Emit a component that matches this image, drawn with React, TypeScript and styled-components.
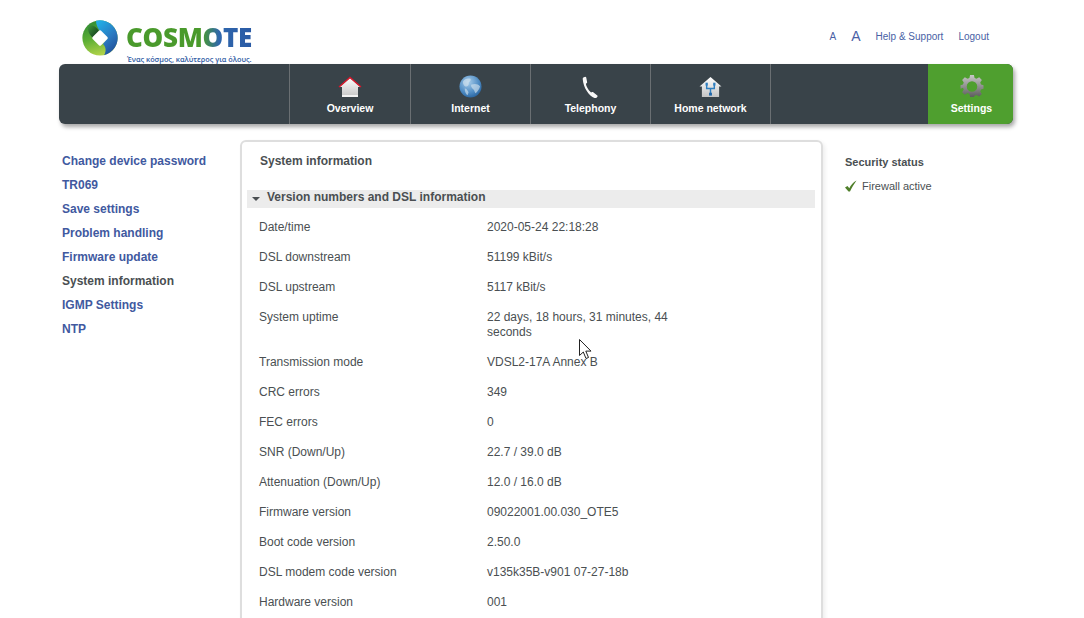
import styled, { createGlobalStyle } from "styled-components";

const GlobalStyle = createGlobalStyle`
  html, body {
    margin: 0;
    height: 618px;
    overflow: hidden;
    background: #fff;
    font-family: "Liberation Sans", Arial, sans-serif;
    font-size: 12px;
    color: #4a4f52;
  }
`;

const menuItems = [
  "Change device password",
  "TR069",
  "Save settings",
  "Problem handling",
  "Firmware update",
  "System information",
  "IGMP Settings",
  "NTP",
];

const infoRows = [
  { label: "Date/time", value: "2020-05-24 22:18:28" },
  { label: "DSL downstream", value: "51199 kBit/s" },
  { label: "DSL upstream", value: "5117 kBit/s" },
  { label: "System uptime", value: "22 days, 18 hours, 31 minutes, 44 seconds" },
  { label: "Transmission mode", value: "VDSL2-17A Annex B" },
  { label: "CRC errors", value: "349" },
  { label: "FEC errors", value: "0" },
  { label: "SNR (Down/Up)", value: "22.7 / 39.0 dB" },
  { label: "Attenuation (Down/Up)", value: "12.0 / 16.0 dB" },
  { label: "Firmware version", value: "09022001.00.030_OTE5" },
  { label: "Boot code version", value: "2.50.0" },
  { label: "DSL modem code version", value: "v135k35B-v901 07-27-18b" },
  { label: "Hardware version", value: "001" },
];

const LogoMark = () => (
  <svg width="36" height="36" viewBox="0 0 36 36">
    <defs>
      <linearGradient id="lg" x1="0.2" y1="0" x2="0.5" y2="1">
        <stop offset="0" stopColor="#2f8a35" />
        <stop offset="0.5" stopColor="#5cae34" />
        <stop offset="1" stopColor="#b3d44a" />
      </linearGradient>
      <linearGradient id="lb" x1="0.2" y1="0" x2="0.8" y2="1">
        <stop offset="0" stopColor="#22aee6" />
        <stop offset="0.55" stopColor="#2a78c0" />
        <stop offset="1" stopColor="#1f4a94" />
      </linearGradient>
      <linearGradient id="ld" x1="0" y1="0" x2="1" y2="1">
        <stop offset="0" stopColor="#3f9a3a" />
        <stop offset="1" stopColor="#0d2f1a" />
      </linearGradient>
    </defs>
    <circle cx="18" cy="18" r="17.6" fill="url(#lg)" />
    <path d="M14 .8 A17.600 17.600 0 0 1 22 35.200 C24.500 31 24 27 21 24 L25.500 18 L18 11 C15.500 8 14 4.500 14 .8Z" fill="url(#lb)" />
    <path d="M6 6C10 4 14 6 17 11L11 18C7.500 15 5.500 11 6 6Z" fill="url(#ld)" />
    <path d="M18 11.500 24.500 18 18 24.500 11.500 18Z" fill="#fff" stroke="#fff" strokeWidth="2.500" strokeLinejoin="round" />
  </svg>
);

const HomeIcon = () => (
  <svg width="24" height="22" viewBox="0 0 24 22">
    <defs>
      <linearGradient id="hw" x1="0" y1="0" x2="0" y2="1">
        <stop offset="0" stopColor="#fbfbfb" />
        <stop offset="1" stopColor="#c8c8c8" />
      </linearGradient>
    </defs>
    <path d="M12 2 22.500 11H20v9H4v-9H1.500Z" fill="url(#hw)" />
    <path d="M1 11 12 1.500 23 11" fill="none" stroke="#d8182c" strokeWidth="1.400" />
    <rect x="4" y="19" width="16" height="2" fill="#f2f2f2" />
  </svg>
);

const GlobeIcon = () => (
  <svg width="23" height="23" viewBox="0 0 24 24">
    <defs>
      <radialGradient id="gb" cx="0.4" cy="0.3" r="0.8">
        <stop offset="0" stopColor="#a8cdea" />
        <stop offset="0.6" stopColor="#4f8cc4" />
        <stop offset="1" stopColor="#1f5a96" />
      </radialGradient>
    </defs>
    <circle cx="12" cy="12" r="11.500" fill="url(#gb)" />
    <path d="M4 7c2-3 5-4 8-3 1 2-1 3-2 4 1 2-1 4-3 4-1 0-3-2-3-5ZM13 10c3-1 7-1 9 2-1 3-3 6-5 7-1-2-1-4-3-5-1-1-2-3-1-4ZM6 14c2 0 3 2 4 4l-1 3c-2-1-3-4-3-7Z" fill="#dbe7f0" opacity=".6" />
  </svg>
);

const PhoneIcon = () => (
  <svg width="18" height="22" viewBox="0 0 20 24">
    <path d="M1.500 1.500 3.500.5c.6 0 1 .4 1.200 1l1 5c.1.600-.1 1-.6 1.300l-.8.6c.3 2.600 2.500 7 5.800 9.600l1-.4c.5-.2 1-.1 1.400.3l4.500 3.600c.4.400.4.800.1 1.200l-1 1.300c-.5.500-1.200.6-2 .3C8 22 1.500 13 .8 3c0-.6.2-1.100.7-1.500Z" fill="#f7f7f7" />
  </svg>
);

const NetworkIcon = () => (
  <svg width="23" height="22" viewBox="0 0 24 23">
    <defs>
      <linearGradient id="nw" x1="0" y1="0" x2="0" y2="1">
        <stop offset="0" stopColor="#fff" />
        <stop offset="1" stopColor="#c4c4c4" />
      </linearGradient>
    </defs>
    <path d="M12 1 23.500 11H21v11H3V11H.5Z" fill="url(#nw)" />
    <path d="M8 9v4h8V9M12 13v6" fill="none" stroke="#2f7fc0" strokeWidth="1.500" />
    <rect x="6.800" y="7" width="2.400" height="3" fill="#2f7fc0" />
    <rect x="14.800" y="7" width="2.400" height="3" fill="#2f7fc0" />
    <rect x="10.500" y="17.500" width="3" height="3" fill="#1f66a8" />
  </svg>
);

const GearIcon = () => (
  <svg width="24" height="23" viewBox="0 0 24 24">
    <defs>
      <linearGradient id="gr" x1="0" y1="0" x2="0" y2="1">
        <stop offset="0" stopColor="#c8c8c8" />
        <stop offset="1" stopColor="#5d5d5d" />
      </linearGradient>
    </defs>
    <path
      fillRule="evenodd"
      d="M10 1h4l.7 3.200 2 .8L19.500 3.300l2.800 2.800-1.700 2.800.8 2 2.600.8v3.600l-2.600.8-.8 2 1.700 2.800-2.800 2.600-2.800-1.700-2 .8L14 24h-4l-.7-3.300-2-.8-2.800 1.700-2.800-2.600 1.700-2.800-.8-2L0 15.300v-3.600l2.600-.8.8-2-1.700-2.800 2.800-2.800 2.800 1.700 2-.8ZM12 7.500a5.500 5.500 0 1 0 0 11 5.500 5.500 0 0 0 0-11Z"
      fill="url(#gr)"
      transform="translate(0 -1)"
    />
  </svg>
);

const CheckIcon = () => (
  <svg width="12" height="12" viewBox="0 0 12 12">
    <path d="M0 7.500 2.500 6l1.800 2.300C5.800 5 8 2.500 11.500.5 9 4 7 7.500 5 11.500H3.500Z" fill="#4f7f2a" />
  </svg>
);

const navTabs = [
  { label: "Overview", icon: <HomeIcon />, width: 120 },
  { label: "Internet", icon: <GlobeIcon />, width: 119 },
  { label: "Telephony", icon: <PhoneIcon />, width: 119 },
  { label: "Home network", icon: <NetworkIcon />, width: 119 },
];

export default function App() {
  return (
    <Page>
      <GlobalStyle />
      <Header>
        <Logo>
          <LogoMark />
          <Brand>
            <BrandName>COSMOTE</BrandName>
            <Tagline>Ένας κόσμος, καλύτερος για όλους.</Tagline>
          </Brand>
        </Logo>
        <TopLinks>
          <FontSizeLink size={10}>A</FontSizeLink>
          <FontSizeLink size={14}>A</FontSizeLink>
          <FontSizeLink size={10}>Help &amp; Support</FontSizeLink>
          <FontSizeLink size={10}>Logout</FontSizeLink>
        </TopLinks>
      </Header>

      <Nav>
        <NavSpacer />
        {navTabs.map((tab) => (
          <NavTab key={tab.label} width={tab.width}>
            <NavIcon>{tab.icon}</NavIcon>
            {tab.label}
          </NavTab>
        ))}
        <NavRest />
        <SettingsTab width={83}>
          <NavIcon>
            <GearIcon />
          </NavIcon>
          Settings
        </SettingsTab>
      </Nav>

      <Main>
        <Sidebar>
          {menuItems.map((item) => (
            <MenuItem key={item} active={item === "System information"}>
              {item}
            </MenuItem>
          ))}
        </Sidebar>

        <Panel>
          <PanelTitle>System information</PanelTitle>
          <SectionBar>
            <Caret />
            Version numbers and DSL information
          </SectionBar>
          <InfoList>
            {infoRows.map((row) => (
              <InfoRow key={row.label}>
                <span>{row.label}</span>
                <InfoValue>{row.value}</InfoValue>
              </InfoRow>
            ))}
          </InfoList>
        </Panel>

        <Aside>
          <AsideTitle>Security status</AsideTitle>
          <StatusLine>
            <CheckIcon />
            Firewall active
          </StatusLine>
        </Aside>
      </Main>

      <Pointer width="14" height="21" viewBox="0 0 14 21">
        <path d="M.5.5v16l3.800-3.500 2.700 6.500 2.500-1-2.700-6.400h5.200Z" fill="#fff" stroke="#222" strokeWidth="1" />
      </Pointer>
    </Page>
  );
}

const Page = styled.div`
  position: relative;
  width: 954px;
  height: 618px;
  overflow: hidden;
  padding: 0 71px 0 59px;
`;

const Header = styled.header`
  height: 64px;
  display: flex;
  justify-content: space-between;
  padding: 0 24px 0 23px;
`;

const Logo = styled.div`
  display: flex;
  align-items: flex-start;
  gap: 8px;
  padding-top: 20px;
`;

const Brand = styled.div`
  display: flex;
  flex-direction: column;
  align-items: flex-start;
`;

const BrandName = styled.div`
  font-family: "Open Sans", sans-serif;
  font-weight: 800;
  font-size: 26px;
  line-height: 26px;
  margin-top: 4px;
  letter-spacing: -0.3px;
  background: linear-gradient(90deg, #4a9a2c 0 60%, #2f67ad 74%, #2a5aa5 100%);
  -webkit-background-clip: text;
  background-clip: text;
  color: transparent;
`;

const Tagline = styled.div`
  font-family: "Open Sans", sans-serif;
  font-weight: 600;
  font-size: 7.300px;
  line-height: 10px;
  margin-top: 4px;
  margin-left: 1px;
  white-space: nowrap;
  color: #2f5ba3;
`;

const TopLinks = styled.div`
  display: flex;
  align-items: center;
  height: 72px;
  gap: 15px;
`;

const FontSizeLink = styled.span<{ size: number }>`
  font-size: ${({ size }) => size}px;
  color: #4a5fa5;
`;

const Nav = styled.nav`
  height: 60px;
  display: flex;
  border-radius: 6px;
  background: #394349;
  box-shadow: 2px 3px 4px rgba(0, 0, 0, 0.35);
  overflow: hidden;
  color: #fff;
  font-size: 10.500px;
  font-weight: bold;
`;

const NavSpacer = styled.div`
  width: 230px;
`;

const NavRest = styled.div`
  flex: 1;
  border-left: 1px solid #6a6f72;
`;

const NavTab = styled.div<{ width: number }>`
  width: ${({ width }) => width}px;
  display: flex;
  flex-direction: column;
  align-items: center;
  border-left: 1px solid #6a6f72;
`;

const SettingsTab = styled(NavTab)`
  border-left: none;
  padding-left: 2px;
  background: #4f9f2f;
`;

const NavIcon = styled.div`
  height: 24px;
  margin: 10px 0 4px;
  display: flex;
  align-items: flex-end;
  justify-content: center;
`;

const Main = styled.main`
  display: flex;
  margin-top: 16px;
  align-items: flex-start;
`;

const Sidebar = styled.aside`
  width: 178px;
  padding: 9px 0 0 3px;
  flex-shrink: 0;
`;

const MenuItem = styled.div<{ active?: boolean }>`
  height: 24px;
  line-height: 24px;
  font-weight: bold;
  white-space: nowrap;
  color: ${({ active }) => (active ? "#4a4f52" : "#41599f")};
`;

const Panel = styled.section`
  width: 579px;
  height: 560px;
  flex-shrink: 0;
  border: 2px solid #dedede;
  border-radius: 6px;
  box-shadow: 2px 2px 4px rgba(0, 0, 0, 0.07);
`;

const PanelTitle = styled.h2`
  margin: 0;
  padding: 11px 0 0 18px;
  height: 37px;
  line-height: 16px;
  font-size: 12px;
  font-weight: bold;
  color: #4a4f52;
`;

const SectionBar = styled.div`
  margin: 0 6px 0 5px;
  height: 18px;
  line-height: 14px;
  background: #ececec;
  font-weight: bold;
  display: flex;
  align-items: flex-start;
  gap: 7px;
  padding-left: 5px;
  color: #4a4f52;
`;

const Caret = styled.span`
  width: 0;
  height: 0;
  margin-top: 7px;
  border-left: 4px solid transparent;
  border-right: 4px solid transparent;
  border-top: 4px solid #4a4f52;
`;

const InfoList = styled.div`
  padding: 12px 0 0 17px;
`;

const InfoRow = styled.div`
  display: grid;
  grid-template-columns: 228px 190px;
  line-height: 15px;
  padding-bottom: 15px;
  color: #4a4f52;
`;

const InfoValue = styled.span`
  display: block;
`;

const Aside = styled.aside`
  margin-left: 22px;
  padding-top: 14px;
`;

const AsideTitle = styled.div`
  font-size: 11px;
  font-weight: bold;
  line-height: 16px;
  color: #4a4f52;
`;

const StatusLine = styled.div`
  display: flex;
  align-items: center;
  gap: 5px;
  margin-top: 8px;
  font-size: 11px;
  line-height: 16px;
  color: #4a4f52;
`;

const Pointer = styled.svg`
  position: absolute;
  left: 579px;
  top: 339px;
`;
